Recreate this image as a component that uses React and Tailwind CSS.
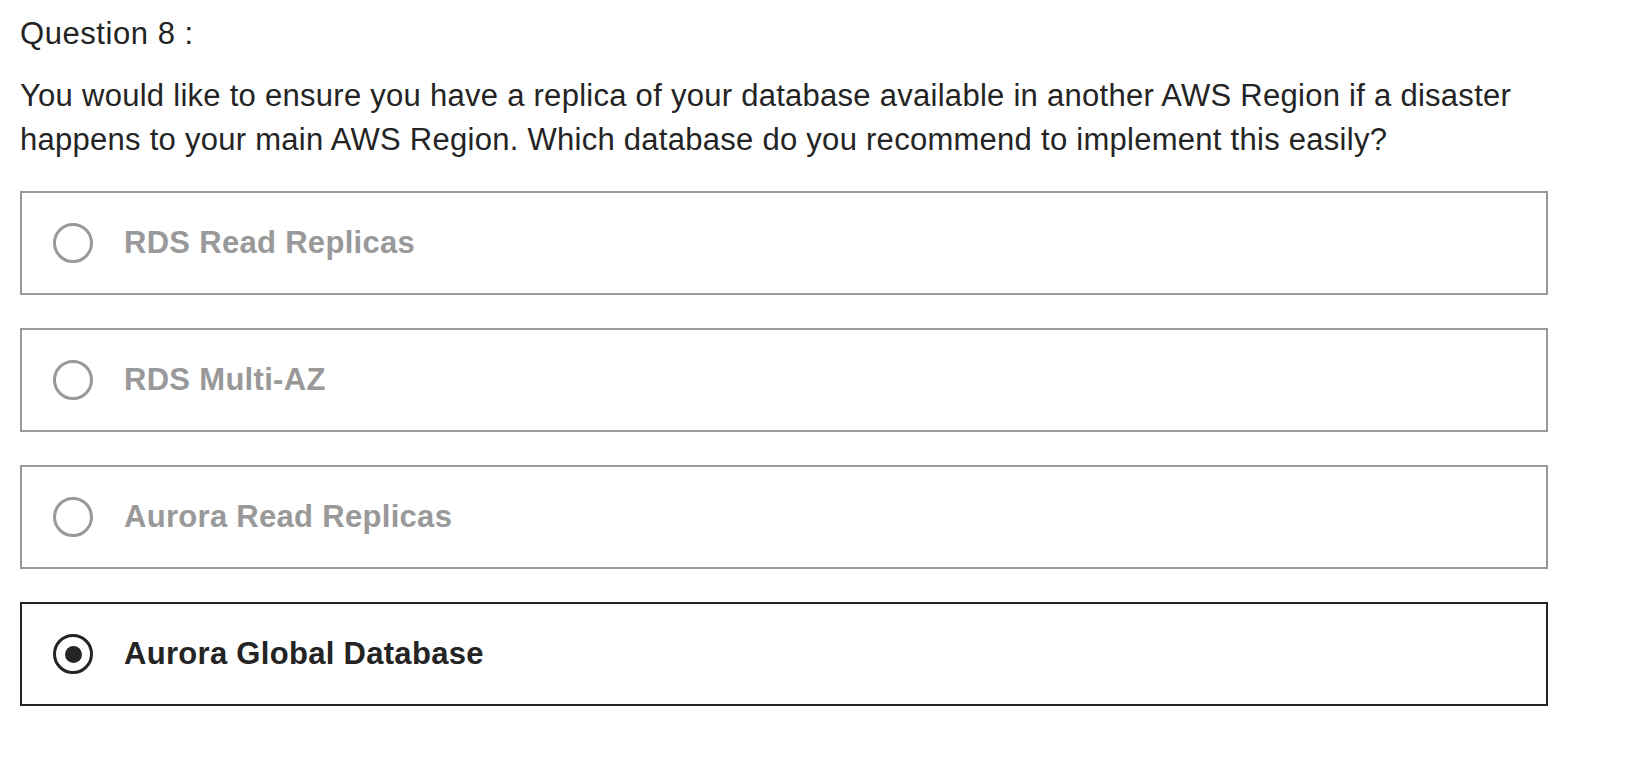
const options = [
  { label: 'RDS Read Replicas', selected: false },
  { label: 'RDS Multi-AZ', selected: false },
  { label: 'Aurora Read Replicas', selected: false },
  { label: 'Aurora Global Database', selected: true },
]

function Radio({ selected }) {
  if (selected) {
    return (
      <span className="flex h-[40px] w-[40px] shrink-0 items-center justify-center rounded-full border-[3.5px] border-[#242424]">
        <span className="h-[17px] w-[17px] rounded-full bg-[#242424]" />
      </span>
    )
  }
  return <span className="h-[40px] w-[40px] shrink-0 rounded-full border-[3.5px] border-[#999999]" />
}

export default function App() {
  return (
    <div className="min-h-screen bg-white px-[20px] pt-[12px] font-['Liberation_Sans',Arial,sans-serif] text-[#242424]">
      <p className="text-[31px] leading-[44px] tracking-[0.55px]">Question 8 :</p>
      <p className="mt-[18px] w-[1530px] text-[31px] leading-[44px] tracking-[0.27px]">
        You would like to ensure you have a replica of your database available in another AWS Region if a disaster happens to your main AWS Region. Which database do you recommend to implement this easily?
      </p>
      <div className="mt-[29px] flex w-[1528px] flex-col gap-[33px]">
        {options.map((o) => (
          <label
            key={o.label}
            className={`flex h-[104px] items-center gap-[31px] border-2 pl-[31px] ${o.selected ? 'border-[#242424]' : 'border-[#999999]'}`}
          >
            <Radio selected={o.selected} />
            <span className={`text-[31px] font-bold tracking-[0.3px] ${o.selected ? 'text-[#242424]' : 'text-[#999999]'}`}>{o.label}</span>
          </label>
        ))}
      </div>
    </div>
  )
}
